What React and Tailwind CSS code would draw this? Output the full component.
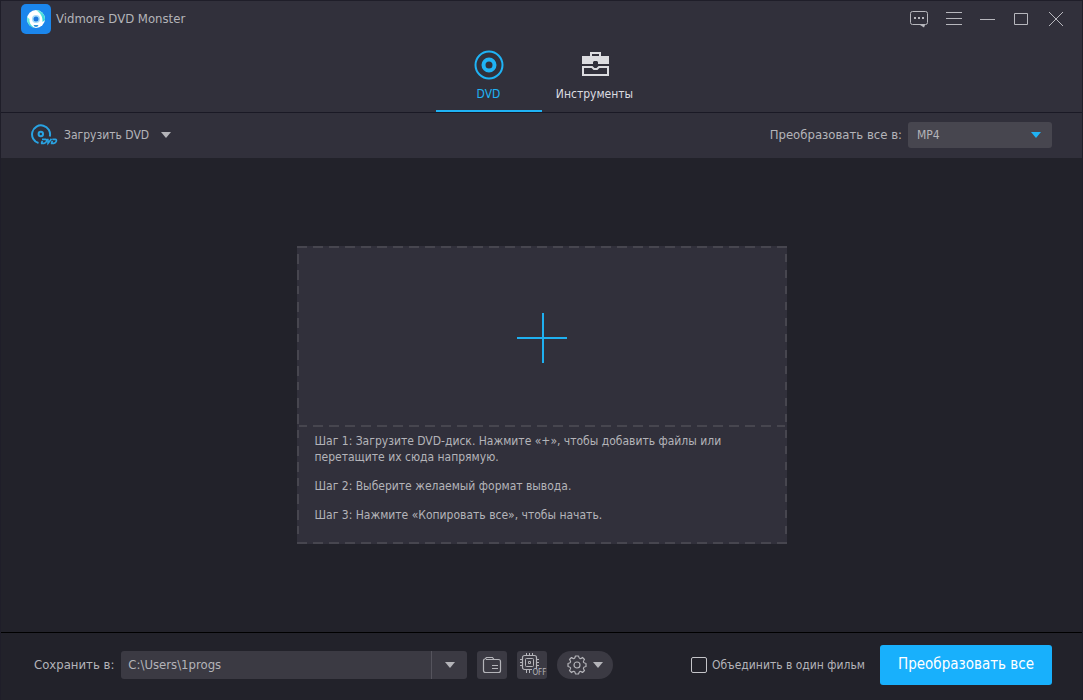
import { useState } from "react";

const steps = [
  "Шаг 1: Загрузите DVD-диск. Нажмите «+», чтобы добавить файлы или перетащите их сюда напрямую.",
  "Шаг 2: Выберите желаемый формат вывода.",
  "Шаг 3: Нажмите «Копировать все», чтобы начать.",
];

function Caret({ className = "" }) {
  return (
    <svg viewBox="0 0 10 6" className={`w-[10px] h-[6px] shrink-0 ${className}`} fill="currentColor">
      <path d="M0 0h10L5 6z" />
    </svg>
  );
}

function AppLogo() {
  return (
    <svg viewBox="0 0 30 30" className="w-[30px] h-[30px] shrink-0">
      <defs>
        <linearGradient id="swirl" x1="0" y1="0" x2="1" y2="1">
          <stop offset="0" stopColor="#7df0e6" />
          <stop offset="1" stopColor="#22cfd6" />
        </linearGradient>
      </defs>
      <rect width="30" height="30" rx="5" fill="#1b86ec" />
      <circle cx="15" cy="15" r="9" fill="#fff" />
      <path d="M15 6a9 9 0 0 1 9 10l-2.500 2c.5-5-2-9-6.500-12z" fill="url(#swirl)" />
      <path d="M6 13a9 9 0 0 0 8 11c-4-2-6-5-5.500-9z" fill="url(#swirl)" />
      <circle cx="15" cy="15" r="4" fill="#a5dcfa" />
      <circle cx="15" cy="15" r="2.500" fill="#1b76dc" />
      <path d="M12.500 21h5q-.5 2-2.500 2t-2.500-2z" fill="#2f93d8" />
    </svg>
  );
}

function DiscIcon() {
  return (
    <svg viewBox="0 0 30 30" className="w-[30px] h-[30px]" fill="none" stroke="currentColor">
      <circle cx="15" cy="15" r="13.500" strokeWidth="2" />
      <circle cx="15" cy="15" r="5.500" strokeWidth="4" />
    </svg>
  );
}

function ToolboxIcon() {
  return (
    <svg viewBox="0 0 30 30" className="w-[30px] h-[30px]" fill="none" stroke="currentColor" strokeWidth="2">
      <path d="M11 7V3h9v4" />
      <path d="M2 6h27v8H18v-2l-1-1h-3l-1 1v2H2z" fill="currentColor" stroke="none" />
      <path d="M3 17h9l2 2h3l2-2h9v8H3z" />
    </svg>
  );
}

function LoadDiscIcon() {
  return (
    <svg viewBox="0 0 28 22" className="w-[28px] h-[22px] shrink-0" fill="none" stroke="#29a3e3">
      <path d="M8.500 19A9 9 0 1 1 19.800 12.500" strokeWidth="2" />
      <circle cx="10.800" cy="10" r="2.200" strokeWidth="2" />
      <g strokeWidth="1.700">
        <path d="M12 15.300h3.500q1.500.2 1 2t-2.500 2h-3M12.300 17l-.9 2.600" />
        <path d="M17.800 14.800l.3 4.400 3.400-4.400" />
        <path d="M22.300 15.300h3q1.500.2 1 2t-2.500 2h-3M22.300 17l-.9 2.600" />
      </g>
    </svg>
  );
}

function FolderIcon() {
  return (
    <svg viewBox="0 0 20 18" className="w-[20px] h-[18px]" fill="none" stroke="#b4b4b9">
      <path d="M1.500 14.500v-10q0-1.500 1.500-1.500l1.500-1.500h6L12 3.500h4.500q2 0 2 2v9q0 2-2 2h-13q-2 0-2-2z" strokeWidth="1.200" />
      <path d="M4 3.500h8" />
      <path d="M10 9.500h6M10 12.500h6" />
    </svg>
  );
}

function ChipIcon() {
  return (
    <svg viewBox="0 0 20 20" className="w-[20px] h-[20px]" fill="none" stroke="#b4b4b9">
      <rect x="2.500" y="2.500" width="14" height="14" rx="2" strokeWidth="1.200" />
      <rect x="5.500" y="5.500" width="8" height="8" rx="1" />
      <path d="M8.500 8.500h2v2h-2z" />
      <path d="M6.500 0v2M9.500 0v2M12.500 0v2M6.500 17v3M9.500 17v3M0 6.500h2M0 9.500h2M0 12.500h2M17 6.500h2M17 9.500h2M17 12.500h2" />
    </svg>
  );
}

function GearIcon() {
  return (
    <svg viewBox="0 0 20 20" className="w-[20px] h-[20px]" fill="none" stroke="#b4b4b9" strokeWidth="1.200" strokeLinejoin="round">
      <path d="M8.500 1h3q.5 2.500 1.500 2.600T15.500 2.500l2 2q-1.500 2-1.100 2.700T19 8.500v3q-2.500.5-2.600 1.500t1.100 2.500l-2 2q-2-1.500-2.700-1.100T11.500 19h-3q-.5-2.500-1.500-2.600t-2.500 1.100l-2-2q1.500-2 1.100-2.700T1 11.500v-3q2.500-.5 2.600-1.500T2.500 4.500l2-2q2 1.500 2.700 1.100T8.500 1z" />
      <circle cx="10" cy="10" r="3" />
    </svg>
  );
}

function WindowControls() {
  return (
    <div className="flex items-center text-[#b7b7bd]">
      <button type="button" aria-label="Обратная связь" className="w-[35px] h-8 grid place-items-center">
        <svg viewBox="0 0 20 18" className="w-[20px] h-[18px]" fill="none" stroke="currentColor">
          <path d="M3.500 1.500h13q2 0 2 2v9q0 2-2 2h-13q-2 0-2-2v-9q0-2 2-2z" />
          <path d="M11 15h5l-1 2.500z" fill="currentColor" stroke="none" />
          <path d="M5 8h2M9 8h2M13 8h2" strokeWidth="2" />
        </svg>
      </button>
      <button type="button" aria-label="Меню" className="w-[35px] h-8 grid place-items-center">
        <svg viewBox="0 0 16 14" className="w-[16px] h-[14px]" stroke="currentColor">
          <path d="M0 .5h16M0 6.500h16M0 12.500h16" />
        </svg>
      </button>
      <button type="button" aria-label="Свернуть" className="w-[33px] h-8 grid place-items-center">
        <svg viewBox="0 0 16 14" className="w-[16px] h-[14px]" stroke="currentColor">
          <path d="M0 7.500h15" />
        </svg>
      </button>
      <button type="button" aria-label="Развернуть" className="w-[34px] h-8 grid place-items-center">
        <svg viewBox="0 0 14 14" className="w-[14px] h-[14px]" fill="none" stroke="currentColor">
          <path d="M.5 1.500h13v11H.5z" />
        </svg>
      </button>
      <button type="button" aria-label="Закрыть" className="w-[35px] h-8 grid place-items-center">
        <svg viewBox="0 0 16 14" className="w-[16px] h-[14px]" stroke="currentColor">
          <path d="M1 0l14 14M15 0L1 14" />
        </svg>
      </button>
    </div>
  );
}

export default function App() {
  const [tab, setTab] = useState("dvd");
  const [path, setPath] = useState("C:\\Users\\1progs");
  const [merge, setMerge] = useState(false);

  const tabs = [
    { id: "dvd", label: "DVD", icon: <DiscIcon /> },
    { id: "tools", label: "Инструменты", icon: <ToolboxIcon /> },
  ];

  return (
    <div className="min-h-screen flex flex-col bg-[#22222a] border border-b-0 border-[#1f1e29] font-['DejaVu_Sans_Condensed','DejaVu_Sans',sans-serif] text-xs text-[#b4b4b9]">
      {/* Title bar and tabs */}
      <header className="bg-[#31303b] border-b border-[#1a1925]">
        <div className="h-9 flex items-center justify-between pl-5 pr-[9px]">
          <div className="flex items-center gap-[5px]">
            <AppLogo />
            <span className="text-[13px]">Vidmore DVD Monster</span>
          </div>
          <WindowControls />
        </div>
        <nav className="flex justify-center">
          {tabs.map((t) => (
            <button
              key={t.id}
              type="button"
              onClick={() => setTab(t.id)}
              className={`w-[106px] h-[75px] pt-[13px] flex flex-col items-center gap-[6px] border-b-2 whitespace-nowrap ${
                tab === t.id ? "border-[#1fb3f5] text-[#1fb3f5]" : "border-transparent text-[#dcdce0]"
              }`}
            >
              {t.icon}
              <span>{t.label}</span>
            </button>
          ))}
        </nav>
      </header>

      {/* Toolbar */}
      <div className="h-[45px] pb-[2px] flex items-center justify-between pl-[29px] pr-[30px] bg-[#31303b]">
        <button type="button" className="flex items-center">
          <LoadDiscIcon />
          <span className="ml-[6px]">Загрузить DVD</span>
          <Caret className="ml-3" />
        </button>
        <div className="flex items-center gap-[6px]">
          <label htmlFor="format" className="text-[13px]">Преобразовать все в:</label>
          <div className="grid items-center w-36">
            <select
              id="format"
              className="col-start-1 row-start-1 h-[26px] px-[9px] rounded-[3px] bg-[#47464f] appearance-none outline-none"
            >
              <option>MP4</option>
              <option>MKV</option>
              <option>AVI</option>
            </select>
            <Caret className="col-start-1 row-start-1 justify-self-end mr-[11px] text-[#1fb3f5] pointer-events-none" />
          </div>
        </div>
      </div>

      {/* Drop area */}
      <main className="flex-1 flex items-center justify-center">
        <section className="w-[490px] px-[2px] flex flex-col bg-[#31303b] bg-[image:repeating-linear-gradient(90deg,#47464f_0_10px,transparent_10px_16px),repeating-linear-gradient(90deg,#47464f_0_10px,transparent_10px_16px),repeating-linear-gradient(180deg,transparent_0_8px,#47464f_8px_18px,transparent_18px_24px,#47464f_24px_34px,transparent_34px_40px,#47464f_40px_48px),repeating-linear-gradient(180deg,transparent_0_8px,#47464f_8px_16px)] bg-[size:100%_2px,100%_2px,2px_100%,2px_100%] bg-[position:top,bottom,left,right] bg-no-repeat">
          <button type="button" aria-label="Добавить файлы" className="h-[179px] pt-[5px] grid place-items-center">
            <svg viewBox="0 0 50 50" className="w-[50px] h-[50px]" stroke="#1fb0f0" strokeWidth="2">
              <path d="M0 25h50M26 0v50" />
            </svg>
          </button>
          <div className="h-[2px] bg-[image:repeating-linear-gradient(90deg,#47464f_0_8px,transparent_8px_14px,#47464f_14px_16px)]" />
          <div className="h-[117px] pt-[6px] px-4 flex flex-col gap-[13px] leading-4">
            {steps.map((step) => (
              <p key={step}>{step}</p>
            ))}
          </div>
        </section>
      </main>

      {/* Output settings */}
      <footer className="h-[68px] pb-[3px] flex items-center justify-between pl-[33px] pr-[30px] border-t border-black">
        <div className="flex items-center">
          <label htmlFor="save-path" className="text-[13px]">Сохранить в:</label>
          <div className="ml-[7px] flex h-7 w-[346px] rounded-[3px] overflow-hidden bg-[#3b3a43]">
            <input
              id="save-path"
              type="text"
              value={path}
              onChange={(e) => setPath(e.target.value)}
              className="flex-1 min-w-0 px-[7px] bg-transparent outline-none text-[13px]"
            />
            <button type="button" aria-label="Выбрать путь" className="w-9 grid place-items-center border-l border-[#55545d]">
              <Caret />
            </button>
          </div>
          <button type="button" aria-label="Открыть папку" className="ml-[10px] w-[30px] h-7 grid place-items-center rounded-[3px] bg-[#3b3a43]">
            <FolderIcon />
          </button>
          <button type="button" aria-label="Аппаратное ускорение" className="relative ml-[10px] w-[30px] h-7 pl-[3px] pb-1 rounded-[3px] bg-[#3b3a43]">
            <ChipIcon />
            <span className="absolute right-px bottom-[2px] bg-[#3b3a43] text-[8px] leading-[8px]">OFF</span>
          </button>
          <button type="button" aria-label="Настройки" className="ml-[10px] w-14 h-7 flex items-center justify-center gap-[6px] rounded-full bg-[#3b3a43]">
            <GearIcon />
            <Caret />
          </button>
        </div>
        <div className="flex items-center gap-[15px]">
          <label className="flex items-center gap-[5px]">
            <input
              type="checkbox"
              checked={merge}
              onChange={(e) => setMerge(e.target.checked)}
              className="w-4 h-4 appearance-none rounded-[2px] border border-[#c4c4c8] checked:bg-[#18b0fc]"
            />
            Объединить в один фильм
          </label>
          <button type="button" className="w-[172px] h-10 rounded-[3px] bg-[#18b0fc] text-white text-[15px]">
            Преобразовать все
          </button>
        </div>
      </footer>
    </div>
  );
}
